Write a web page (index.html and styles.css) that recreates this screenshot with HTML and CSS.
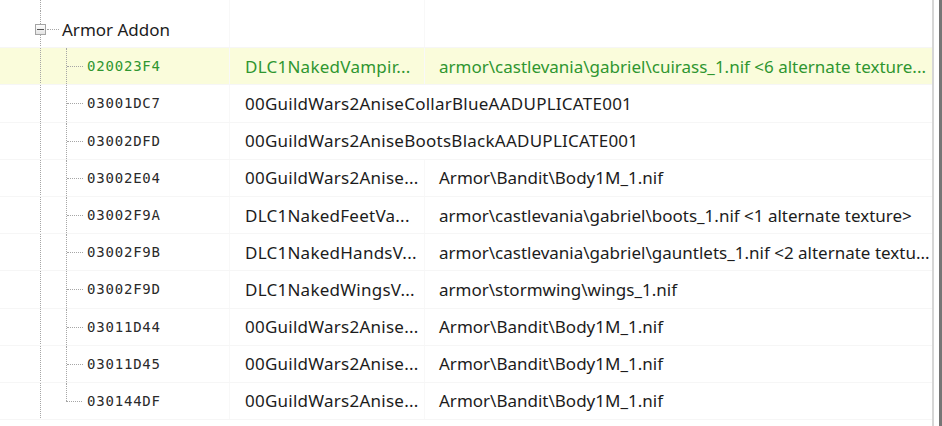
FILE: index.html
```html
<!DOCTYPE html>
<html lang="en">
<head>
  <meta charset="UTF-8">
  <title>Armor Addon</title>
  <link rel="stylesheet" href="styles.css">
</head>
<body>
  <div class="frame">
    <div class="tree">
      <div class="row spacer">
        <div class="cell key"></div>
        <div class="cell"></div>
        <div class="cell"></div>
      </div>

      <div class="row group">
        <div class="cell key">
          <span class="toggle"><span class="minus"></span></span>
          <span class="stub"></span>
          <span class="label">Armor Addon</span>
        </div>
        <div class="cell"></div>
        <div class="cell"></div>
      </div>

      <div class="row item selected">
        <div class="cell key"><span class="branch"></span><span class="code">020023F4</span></div>
        <div class="cell name">DLC1NakedVampir...</div>
        <div class="cell path">armor\castlevania\gabriel\cuirass_1.nif &lt;6 alternate texture...</div>
      </div>
      <div class="row item">
        <div class="cell key"><span class="branch"></span><span class="code">03001DC7</span></div>
        <div class="cell name wide">00GuildWars2AniseCollarBlueAADUPLICATE001</div>
      </div>
      <div class="row item">
        <div class="cell key"><span class="branch"></span><span class="code">03002DFD</span></div>
        <div class="cell name wide">00GuildWars2AniseBootsBlackAADUPLICATE001</div>
      </div>
      <div class="row item">
        <div class="cell key"><span class="branch"></span><span class="code">03002E04</span></div>
        <div class="cell name">00GuildWars2Anise...</div>
        <div class="cell path">Armor\Bandit\Body1M_1.nif</div>
      </div>
      <div class="row item">
        <div class="cell key"><span class="branch"></span><span class="code">03002F9A</span></div>
        <div class="cell name">DLC1NakedFeetVa...</div>
        <div class="cell path">armor\castlevania\gabriel\boots_1.nif &lt;1 alternate texture&gt;</div>
      </div>
      <div class="row item">
        <div class="cell key"><span class="branch"></span><span class="code">03002F9B</span></div>
        <div class="cell name">DLC1NakedHandsV...</div>
        <div class="cell path">armor\castlevania\gabriel\gauntlets_1.nif &lt;2 alternate textu...</div>
      </div>
      <div class="row item">
        <div class="cell key"><span class="branch"></span><span class="code">03002F9D</span></div>
        <div class="cell name">DLC1NakedWingsV...</div>
        <div class="cell path">armor\stormwing\wings_1.nif</div>
      </div>
      <div class="row item">
        <div class="cell key"><span class="branch"></span><span class="code">03011D44</span></div>
        <div class="cell name">00GuildWars2Anise...</div>
        <div class="cell path">Armor\Bandit\Body1M_1.nif</div>
      </div>
      <div class="row item">
        <div class="cell key"><span class="branch"></span><span class="code">03011D45</span></div>
        <div class="cell name">00GuildWars2Anise...</div>
        <div class="cell path">Armor\Bandit\Body1M_1.nif</div>
      </div>
      <div class="row item last">
        <div class="cell key"><span class="branch"></span><span class="code">030144DF</span></div>
        <div class="cell name">00GuildWars2Anise...</div>
        <div class="cell path">Armor\Bandit\Body1M_1.nif</div>
      </div>
    </div>
    <div class="scroll-edge"></div>
  </div>
</body>
</html>
```

FILE: styles.css
```css
* {
  margin: 0;
  padding: 0;
  box-sizing: border-box;
}

body {
  width: 942px;
  height: 426px;
  overflow: hidden;
  background: #fff;
  font-family: 'Noto Sans', 'Open Sans', sans-serif;
  color: #1c1c1c;
}

.frame {
  display: flex;
  height: 426px;
}

.tree {
  width: 934px;
  height: 426px;
  overflow: hidden;
  border-right: 2px solid #d6d6d6;
}

.scroll-edge {
  width: 8px;
  border-right: 3px solid #767676;
}

.row {
  display: grid;
  grid-template-columns: 230px 195px 1fr;
  height: 37.2px;
  border-bottom: 1px solid #f6f6f6;
}

.row.spacer {
  height: 11px;
  border-bottom: none;
}

.row.selected {
  background: #fafcdb;
  color: #2f9630;
}

.cell {
  display: flex;
  align-items: center;
  white-space: nowrap;
  overflow: hidden;
  font-size: 17px;
  border-right: 1px solid #f8f8f8;
}

.cell:last-child {
  border-right: none;
}

.cell.wide {
  grid-column: 2 / 4;
  border-right: none;
}

/* parent guide line at x = 40 */
.cell.key {
  align-items: stretch;
  background-image: repeating-linear-gradient(to bottom, #a6a6a6 0 1px, transparent 1px 2px);
  background-size: 1px 100%;
  background-position: 40px 0;
  background-repeat: no-repeat;
}

.group .cell.key {
  align-items: center;
  padding-left: 35px;
}

.toggle {
  width: 11px;
  height: 11px;
  border: 1px solid #a4a4a4;
  background: linear-gradient(#fdfdfd, #e4e4e4);
  display: flex;
  align-items: center;
  justify-content: center;
}

.minus {
  width: 7px;
  height: 1px;
  background: #555;
}

.stub {
  width: 12px;
  height: 1px;
  border-top: 1px dotted #a6a6a6;
  margin-left: 1px;
}

.label {
  margin-left: 3px;
  font-size: 17px;
}

.item .cell.key {
  padding-left: 66px;
}

.branch {
  position: relative;
  width: 16px;
  border-left: 1px dotted #a6a6a6;
}

.last .branch {
  border-left: none;
}

.last .branch::before {
  content: "";
  position: absolute;
  left: 0;
  top: 0;
  height: 50%;
  border-left: 1px dotted #a6a6a6;
}

.branch::after {
  content: "";
  position: absolute;
  left: 0;
  top: 50%;
  width: 16px;
  border-top: 1px dotted #a6a6a6;
}

.code {
  align-self: center;
  margin-left: 5px;
  font-family: 'DejaVu Sans Mono', 'Liberation Mono', monospace;
  font-size: 14px;
  letter-spacing: 0.8px;
  color: #2a2a2a;
}

.selected .code {
  color: #2f9630;
}

.name {
  padding-left: 15px;
  letter-spacing: 0.25px;
}

.path {
  padding-left: 14px;
}
```
